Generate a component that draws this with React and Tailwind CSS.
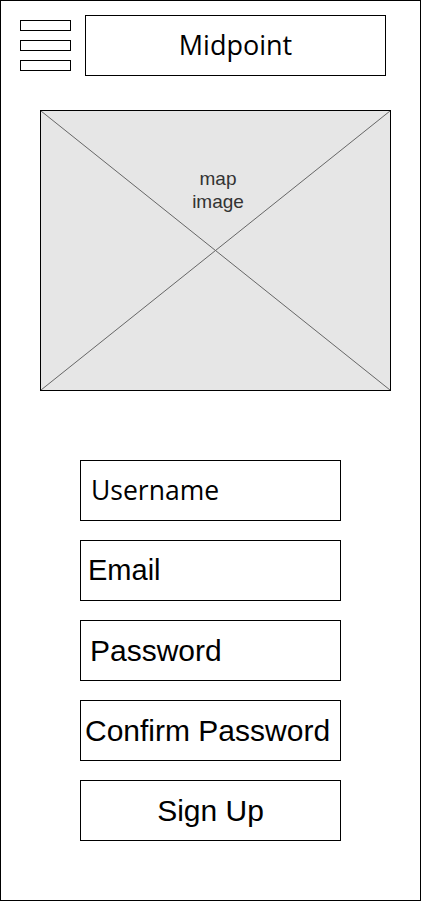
import React from "react";

function Field({ label, pl, font, size }) {
  return (
    <div
      className={`flex items-center w-[261px] h-[61px] border border-black text-black ${pl} ${font} ${size}`}
    >
      {label}
    </div>
  );
}

export default function App() {
  return (
    <div className="w-[421px] h-[901px] border border-black bg-white box-border">
      <div className="flex items-start pt-[14px] pl-[19px]">
        <div className="flex flex-col gap-[9px] mt-[5px]">
          <div className="w-[51px] h-[11px] border border-black" />
          <div className="w-[51px] h-[11px] border border-black" />
          <div className="w-[51px] h-[11px] border border-black" />
        </div>
        <div className="ml-[14px] w-[301px] h-[61px] border border-black flex items-center justify-center text-[27px] text-black font-['Segoe_UI','Open_Sans',sans-serif]">
          Midpoint
        </div>
      </div>

      <div className="relative ml-[39px] mt-[34px] w-[351px] h-[281px] border border-black bg-[#e6e6e6]">
        <svg
          className="absolute inset-0"
          width="349"
          height="279"
          viewBox="0 0 349 279"
        >
          <line x1="0" y1="0" x2="349" y2="279" stroke="#666666" strokeWidth="1" />
          <line x1="349" y1="0" x2="0" y2="279" stroke="#666666" strokeWidth="1" />
        </svg>
        <div className="absolute left-[5px] right-0 top-[56px] text-center text-[19px] leading-[23px] text-[#333333] font-['Liberation_Sans',Arial,sans-serif]">
          map
          <br />
          image
        </div>
      </div>

      <div className="ml-[79px] mt-[69px] flex flex-col gap-[19px]">
        <Field label="Username" pl="pl-[10px]" font="font-['Segoe_UI','Open_Sans',sans-serif]" size="text-[26.5px]" />
        <Field label="Email" pl="pl-[7px]" font="font-['Liberation_Sans',Arial,sans-serif]" size="text-[29px]" />
        <Field label="Password" pl="pl-[9px]" font="font-['Liberation_Sans',Arial,sans-serif]" size="text-[30px]" />
        <Field label="Confirm Password" pl="pl-[4px]" font="font-['Liberation_Sans',Arial,sans-serif]" size="text-[30px]" />
        <div className="flex items-center justify-center w-[261px] h-[61px] border border-black text-black text-[30px] font-['Liberation_Sans',Arial,sans-serif]">
          Sign Up
        </div>
      </div>
    </div>
  );
}
